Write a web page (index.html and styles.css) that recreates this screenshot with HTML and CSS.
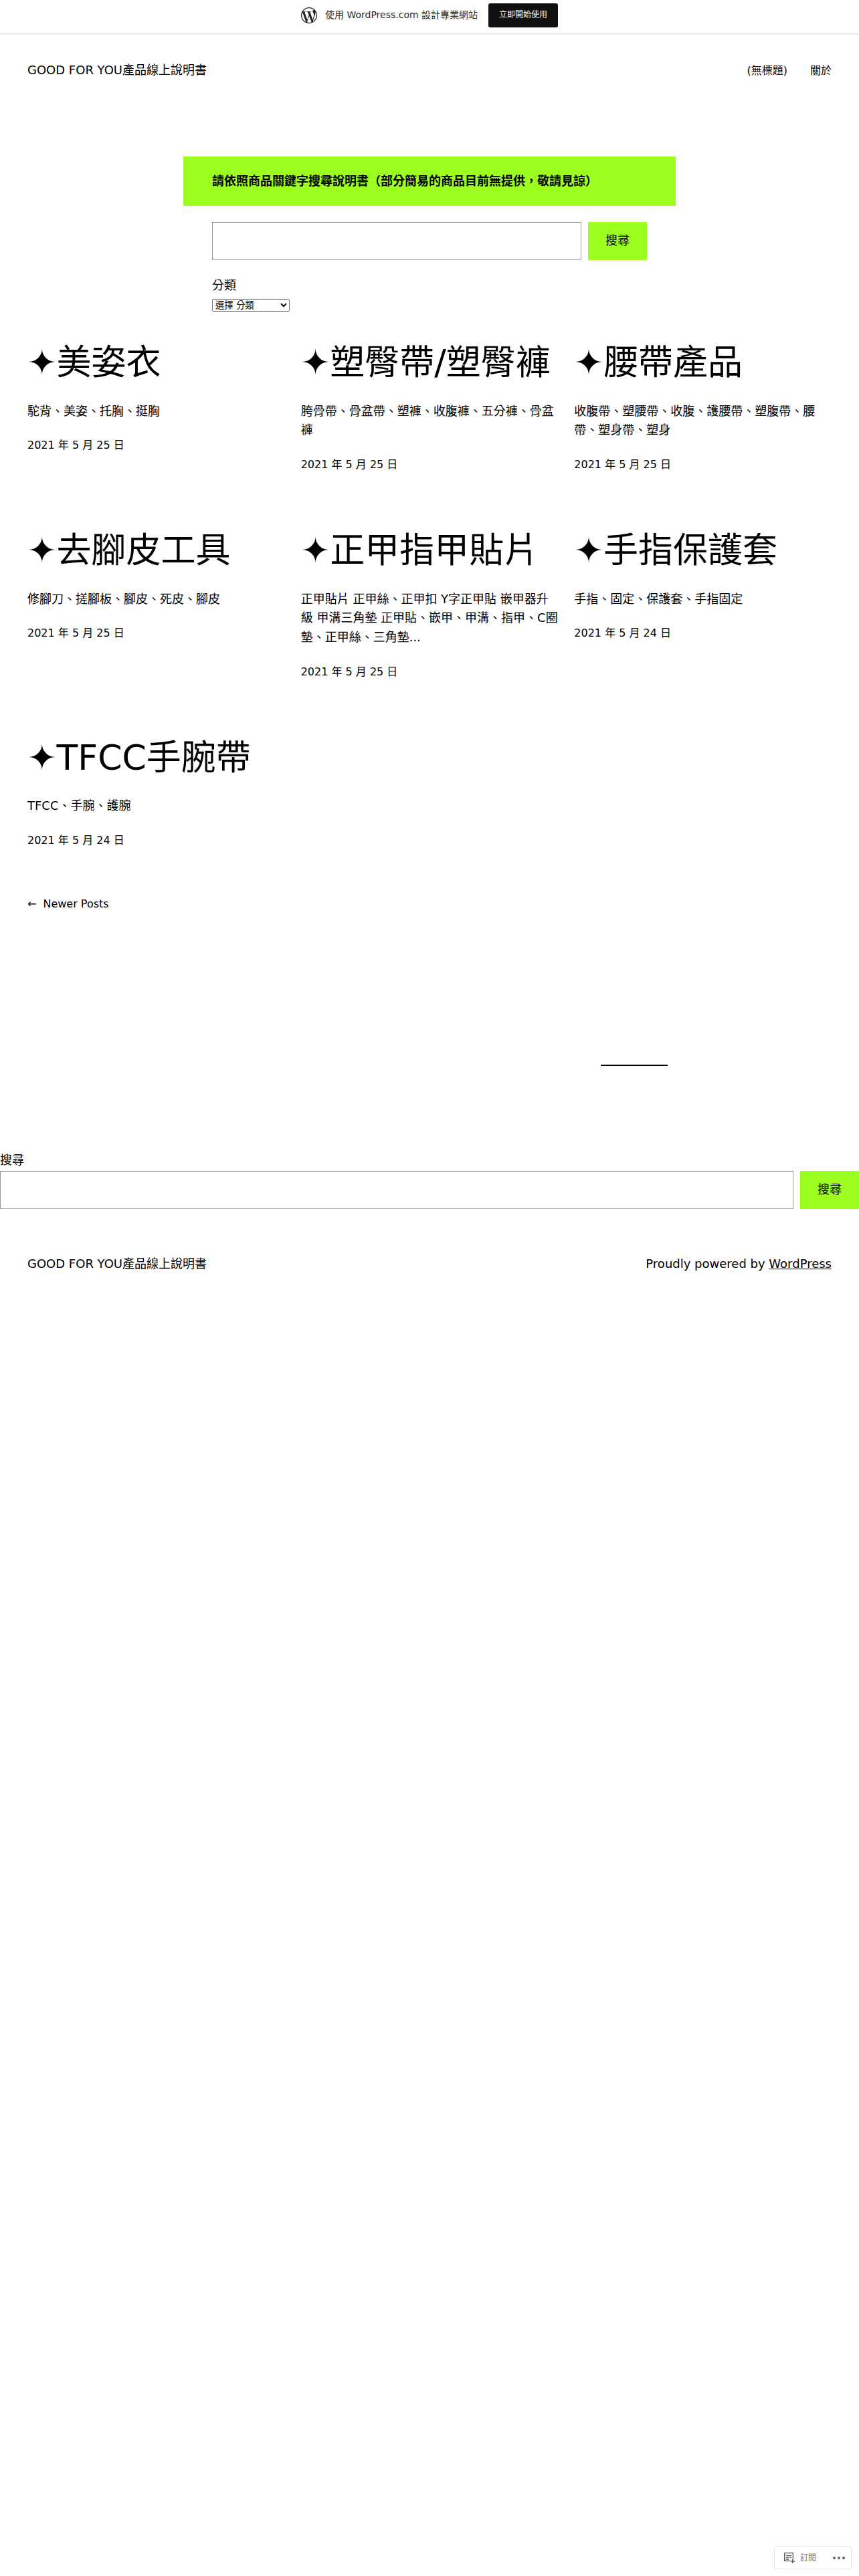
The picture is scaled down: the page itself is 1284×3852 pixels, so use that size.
FILE: index.html
```html
<!DOCTYPE html>
<html lang="zh-TW">
<head>
<meta charset="utf-8">
<title>GOOD FOR YOU產品線上說明書</title>
<link rel="stylesheet" href="styles.css">
</head>
<body>
<div class="banner">
  <svg class="wp-logo" viewBox="0 0 24 24" aria-hidden="true"><path d="M21.469 6.825c.84 1.537 1.318 3.3 1.318 5.175 0 3.979-2.156 7.456-5.363 9.325l3.295-9.527c.615-1.54.82-2.771.82-3.864 0-.405-.026-.78-.07-1.11m-7.981.105c.647-.03 1.232-.105 1.232-.105.582-.075.514-.93-.067-.899 0 0-1.755.135-2.88.135-1.064 0-2.85-.15-2.85-.15-.585-.03-.661.855-.075.885 0 0 .54.061 1.125.09l1.68 4.605-2.37 7.08L5.354 6.9c.649-.03 1.234-.1 1.234-.1.585-.075.516-.93-.065-.896 0 0-1.746.138-2.874.138-.2 0-.438-.008-.69-.015C4.911 3.15 8.235 1.215 12 1.215c2.809 0 5.365 1.072 7.286 2.833-.046-.003-.091-.009-.141-.009-1.06 0-1.812.923-1.812 1.914 0 .89.513 1.643 1.06 2.531.411.72.89 1.643.89 2.977 0 .915-.354 1.994-.821 3.479l-1.075 3.585-3.9-11.61.001.014zM12 22.784c-1.059 0-2.081-.153-3.048-.437l3.237-9.406 3.315 9.087c.024.053.05.101.078.149-1.12.393-2.325.609-3.582.609M1.211 12c0-1.564.336-3.05.935-4.39L7.29 21.709C3.694 19.96 1.212 16.271 1.211 12M12 0C5.385 0 0 5.385 0 12s5.385 12 12 12 12-5.385 12-12S18.615 0 12 0"/></svg>
  <span class="banner-text">使用 WordPress.com 設計專業網站</span>
  <a class="banner-btn" href="#">立即開始使用</a>
</div>

<header class="site-header">
  <a class="site-title" href="#">GOOD FOR YOU產品線上說明書</a>
  <nav class="site-nav"><a href="#">(無標題)</a><a href="#">關於</a></nav>
</header>

<section class="finder">
  <h2 class="finder-title">請依照商品關鍵字搜尋說明書（部分簡易的商品目前無提供，敬請見諒）</h2>
  <div class="finder-body">
    <form class="search-row">
      <input class="search-input" type="text" aria-label="搜尋">
      <button class="search-btn" type="button">搜尋</button>
    </form>
    <label class="cat-label" for="cat">分類</label>
    <select class="cat-select" id="cat"><option>選擇 分類</option></select>
  </div>
</section>

<main class="posts">
  <article class="post">
    <h1 class="post-title">✦美姿衣</h1>
    <p class="post-excerpt">駝背、美姿、托胸、挺胸</p>
    <time class="post-date">2021 年 5 月 25 日</time>
  </article>
  <article class="post">
    <h1 class="post-title">✦塑臀帶/塑臀褲</h1>
    <p class="post-excerpt">胯骨帶、骨盆帶、塑褲、收腹褲、五分褲、骨盆褲</p>
    <time class="post-date">2021 年 5 月 25 日</time>
  </article>
  <article class="post">
    <h1 class="post-title">✦腰帶產品</h1>
    <p class="post-excerpt">收腹帶、塑腰帶、收腹、護腰帶、塑腹帶、腰帶、塑身帶、塑身</p>
    <time class="post-date">2021 年 5 月 25 日</time>
  </article>
  <article class="post">
    <h1 class="post-title">✦去腳皮工具</h1>
    <p class="post-excerpt">修腳刀、搓腳板、腳皮、死皮、腳皮</p>
    <time class="post-date">2021 年 5 月 25 日</time>
  </article>
  <article class="post">
    <h1 class="post-title">✦正甲指甲貼片</h1>
    <p class="post-excerpt">正甲貼片 正甲絲、正甲扣 Y字正甲貼 嵌甲器升級 甲溝三角墊 正甲貼、嵌甲、甲溝、指甲、C圈墊、正甲絲、三角墊...</p>
    <time class="post-date">2021 年 5 月 25 日</time>
  </article>
  <article class="post">
    <h1 class="post-title">✦手指保護套</h1>
    <p class="post-excerpt">手指、固定、保護套、手指固定</p>
    <time class="post-date">2021 年 5 月 24 日</time>
  </article>
  <article class="post">
    <h1 class="post-title">✦TFCC手腕帶</h1>
    <p class="post-excerpt">TFCC、手腕、護腕</p>
    <time class="post-date">2021 年 5 月 24 日</time>
  </article>
</main>

<nav class="pager"><a href="#"><span class="pager-arrow">←</span>Newer Posts</a></nav>

<hr class="rule">

<form class="wide-search">
  <label class="wide-label" for="s2">搜尋</label>
  <div class="wide-row">
    <input class="search-input" id="s2" type="text">
    <button class="search-btn" type="button">搜尋</button>
  </div>
</form>

<footer class="site-footer">
  <a class="site-title" href="#">GOOD FOR YOU產品線上說明書</a>
  <p class="credit">Proudly powered by <a href="#">WordPress</a></p>
</footer>

<div class="subscribe">
  <svg class="sub-icon" viewBox="0 0 18 18" aria-hidden="true"><path d="M1 1h14v9h-1.300V2.300H2.300v10.400H10V14H1z"/><path d="M4 5h8v1.300H4zM4 8h4v1.300H4zM9.300 8h2.700v1.300H9.300zM4 10.600h4v1.200H4z"/><path d="M13 11h1.400v2.300H17v1.400h-2.600V17H13v-2.300h-2.400v-1.400H13z"/></svg>
  <span class="sub-label">訂閱</span>
  <span class="sub-more"><i></i><i></i><i></i></span>
</div>
</body>
</html>
```

FILE: styles.css
```css
* { box-sizing: border-box; }
html, body { margin: 0; padding: 0; }
body {
  position: relative;
  min-height: 3852px;
  background: #fff;
  color: #000;
  font-family: "DejaVu Sans", "Noto Sans CJK TC", sans-serif;
  font-size: 18px;
  line-height: 1.6;
}
a { color: inherit; text-decoration: none; }

.banner {
  height: 52px;
  padding-bottom: 3px;
  border-bottom: 3px solid #eee;
  display: flex;
  align-items: center;
  justify-content: center;
  gap: 12px;
  font-size: 14px;
  color: #2c2c2c;
}
.wp-logo { width: 24px; height: 24px; fill: #1d2327; }
.banner-text { line-height: 1.4; }
.banner-btn {
  margin-left: 4px;
  width: 104px;
  height: 36px;
  display: flex;
  align-items: center;
  justify-content: center;
  background: #101010;
  color: #fff;
  border-radius: 3px;
  font-size: 12px;
}

.site-header {
  display: flex;
  justify-content: space-between;
  align-items: center;
  padding: 39px 41px 0;
}
.site-nav { display: flex; gap: 34px; font-size: 16px; }

.finder { width: 736px; margin: 114.2px auto 0; }
.finder-title {
  margin: 0;
  height: 74px;
  padding: 22px 43px;
  background: #9dff20;
  font-family: "Liberation Sans", "Noto Sans CJK TC", sans-serif;
  font-size: 18px;
  font-weight: 700;
  line-height: 30px;
}
.finder-body { padding: 24px 43px 0; }
.search-row { display: flex; gap: 10px; width: 650px; }
.search-input {
  flex: 1;
  min-width: 0;
  height: 57px;
  border: 1px solid #949494;
  background: #fff;
  margin: 0;
}
.search-btn {
  width: 88px;
  height: 57px;
  border: 0;
  margin: 0;
  padding: 0;
  background: #9dff20;
  color: #000;
  font: inherit;
}
.cat-label { display: block; margin-top: 24px; }
.cat-select {
  display: block;
  margin-top: 5px;
  width: 116px;
  height: 19px;
  font-family: "DejaVu Sans", "Noto Sans CJK TC", sans-serif;
  font-size: 13.33px;
}

.posts {
  display: grid;
  grid-template-columns: repeat(3, minmax(0, 1fr));
  column-gap: 24px;
  row-gap: 79px;
  padding: 40px 41px 0;
}
.post-title {
  margin: 0;
  font-size: 52px;
  font-weight: 400;
  line-height: 1.4;
}
.post-excerpt { margin: 22px 0 0; }
.post-date { display: block; margin-top: 24px; font-size: 16px; }

.pager { padding: 69px 41px 0; font-size: 16px; }
.pager-arrow { margin-right: 10px; }

.rule {
  width: 100px;
  height: 2px;
  margin: 228px 0 0 898px;
  border: 0;
  background: #000;
}

.wide-search { margin-top: 127px; }
.wide-label { display: block; }
.wide-row { display: flex; gap: 10px; margin-top: 1px; }

.site-footer {
  display: flex;
  justify-content: space-between;
  align-items: center;
  padding: 68px 41px 0;
}
.credit { margin: 0; }
.credit a { text-decoration: underline; }

.subscribe {
  position: absolute;
  left: 1157px;
  top: 3807px;
  width: 116px;
  height: 35px;
  display: flex;
  align-items: center;
  padding: 0 9px 0 13px;
  background: #fff;
  border: 1px solid #e2e2e2;
  border-radius: 4px;
  color: #6f6f6f;
  font-size: 12px;
}
.sub-icon { width: 18px; height: 18px; fill: #555; }
.sub-label { margin-left: 7px; line-height: 1; }
.sub-more { margin-left: auto; display: flex; gap: 3px; }
.sub-more i { width: 4px; height: 4px; border-radius: 50%; background: #666; }
```
